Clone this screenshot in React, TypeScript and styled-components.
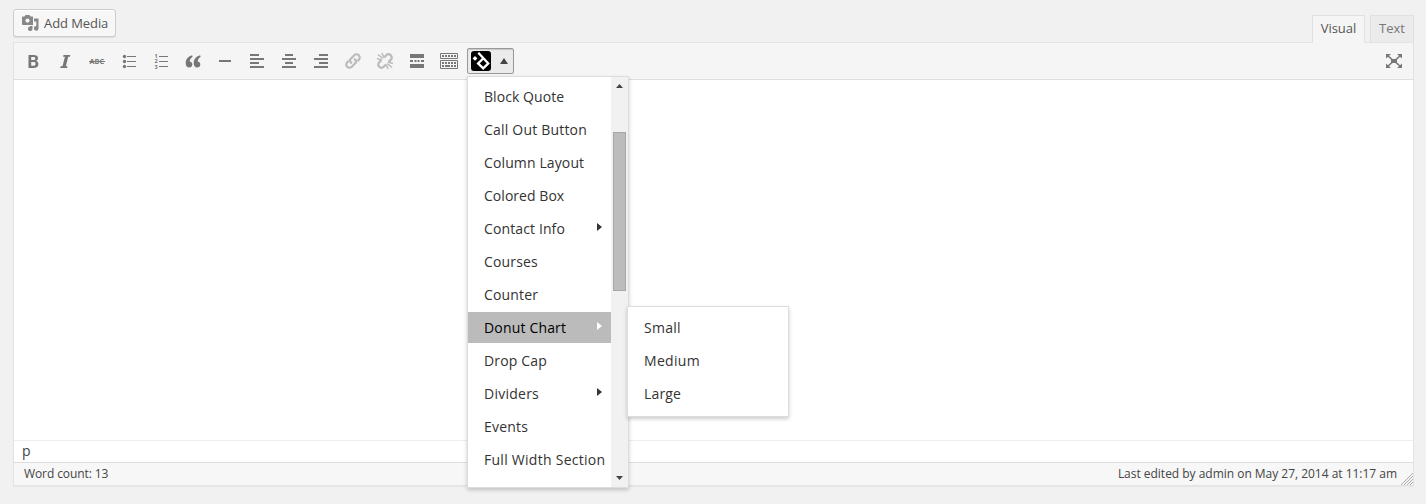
import React from 'react';
import styled, { createGlobalStyle } from 'styled-components';

const GlobalStyle = createGlobalStyle`
  * { box-sizing: border-box; }
  body {
    margin: 0;
    background: #f1f1f1;
    color: #444;
    font: 13px/18px "Open Sans", sans-serif;
  }
`;

const Page = styled.div`
  height: 504px;
  padding: 9px 12px 0 13px;
  overflow: hidden;
`;

const Header = styled.header`
  display: flex;
  justify-content: space-between;
  height: 33px;
`;

const MediaButton = styled.button`
  display: flex;
  align-items: center;
  gap: 5px;
  width: 103px;
  height: 28px;
  padding: 0 0 0 7px;
  font: 13px/26px "Open Sans", sans-serif;
  letter-spacing: -0.08px;
  color: #555;
  background: #f7f7f7;
  border: 1px solid #ccc;
  border-radius: 3px;
  box-shadow: inset 0 1px 0 #fff, 0 1px 0 rgba(0, 0, 0, 0.08);
  white-space: nowrap;
`;

const Tabs = styled.div`
  display: flex;
  gap: 5px;
  padding: 6px 0 0;
`;

const Tab = styled.div<{ $active?: boolean; $width: number }>`
  position: relative;
  z-index: 1;
  width: ${(p) => p.$width}px;
  height: ${(p) => (p.$active ? 28 : 27)}px;
  padding-top: 3px;
  text-align: center;
  color: ${(p) => (p.$active ? '#555' : '#777')};
  background: ${(p) => (p.$active ? '#f5f5f5' : '#ebebeb')};
  border: 1px solid #e0e0e0;
  border-bottom: 0;
`;

const Editor = styled.main`
  width: 1401px;
  border: 1px solid #e3e3e3;
  box-shadow: 0 1px 1px rgba(0, 0, 0, 0.04);
`;

const Toolbar = styled.div`
  display: flex;
  align-items: center;
  height: 37px;
  padding: 0 9px 0 3px;
  background: #f5f5f5;
  border-bottom: 1px solid #dedede;
`;

const Tool = styled.span<{ $dim?: boolean }>`
  display: flex;
  justify-content: center;
  width: 32px;
  height: 20px;
  color: #777;
  opacity: ${(p) => (p.$dim ? 0.45 : 1)};
`;

const ExpandTool = styled(Tool)`
  width: 20px;
`;

const Spacer = styled.div`
  flex: 1;
`;

const DropdownWrap = styled.div`
  position: relative;
  margin-left: 2px;
`;

const DropdownButton = styled.div`
  display: flex;
  align-items: center;
  gap: 9px;
  width: 47px;
  height: 26px;
  padding-left: 3px;
  background: #ebebeb;
  border: 1px solid #999;
  border-radius: 2px;
  box-shadow: inset 0 1px 1px rgba(0, 0, 0, 0.15);
`;

const Panel = styled.div`
  position: absolute;
  z-index: 5;
  background: #fff;
  border: 1px solid #ddd;
  box-shadow: 0 2px 4px rgba(0, 0, 0, 0.2);
`;

const Menu = styled(Panel)`
  top: 28px;
  left: 0;
  display: flex;
  width: 162px;
  height: 412px;
`;

const Submenu = styled(Panel)`
  top: 258px;
  left: 160px;
  z-index: 6;
  width: 162px;
  height: 111px;
  padding-top: 5px;
`;

const Items = styled.div`
  width: 143px;
  padding-top: 4px;
`;

const Item = styled.div<{ $active?: boolean; $tracking?: number }>`
  display: flex;
  align-items: center;
  justify-content: space-between;
  height: 31px;
  margin-bottom: 2px;
  padding: 0 9px 0 16px;
  font-size: 14px;
  line-height: 20px;
  letter-spacing: ${(p) => p.$tracking ?? 0.15}px;
  white-space: nowrap;
  color: ${(p) => (p.$active ? '#000' : '#333')};
  background: ${(p) => (p.$active ? '#bbb' : 'transparent')};
`;

const Caret = styled.span<{ $light?: boolean }>`
  width: 5px;
  height: 8px;
  margin-bottom: 3px;
  background: ${(p) => (p.$light ? '#fff' : '#333')};
  clip-path: polygon(0 0, 100% 50%, 0 100%);
`;

const Scrollbar = styled.div`
  display: flex;
  flex-direction: column;
  align-items: center;
  width: 17px;
  padding: 7px 0 7px;
  background: #f1f1f1;
`;

const Thumb = styled.div`
  width: 13px;
  height: 159px;
  margin-top: 44px;
  background: #bcbcbc;
  border: 1px solid #a8a8a8;
`;

const Arrow = styled.span<{ $down?: boolean; $size?: number }>`
  width: ${(p) => p.$size ?? 7}px;
  height: ${(p) => (p.$size ? 6 : 4)}px;
  background: #444;
  clip-path: ${(p) => (p.$down ? 'polygon(0 0, 100% 0, 50% 100%)' : 'polygon(50% 0, 100% 100%, 0 100%)')};
`;

const Content = styled.div`
  height: 360px;
  background: #fff;
`;

const PathRow = styled.div`
  height: 22px;
  padding: 1px 8px;
  font-size: 14px;
  background: #fff;
  border-top: 1px solid #eee;
`;

const StatusBar = styled.footer`
  display: flex;
  justify-content: space-between;
  height: 23px;
  padding: 2px 0 0 10px;
  font-size: 12px;
  background: #f7f7f7;
  border-top: 1px solid #dedede;
`;

const WordCount = styled.span`
  letter-spacing: -0.1px;
`;

const Edited = styled.div`
  display: flex;
  gap: 4px;
  letter-spacing: -0.02px;
`;

const Grip = styled.svg`
  margin-top: 8px;
`;

type IconName =
  | 'bold' | 'italic' | 'strike' | 'bullets' | 'numbers' | 'quote' | 'rule'
  | 'left' | 'center' | 'right' | 'link' | 'unlink' | 'more' | 'keyboard' | 'expand';

const glyphs: Record<IconName, React.ReactNode> = {
  bold: (
    <path
      fillRule="evenodd"
      d="M5.500 4h4.900c3 0 4.600 1 4.600 3.200 0 1.400-.8 2.400-2 2.700 1.500.3 2.400 1.400 2.400 3.100 0 2.600-1.900 4-5 4H5.500zM8.200 6.100v2.800h1.900c1.500 0 2.200-.5 2.200-1.500S11.600 6.100 10.100 6.100zM8.200 11v3.800h2c1.600 0 2.400-.6 2.400-2S11.800 11 10.200 11z"
    />
  ),
  italic: <path d="M8.500 4h6.800l-.4 1.800h-1.700L10.900 15.200h1.600l-.4 1.800H5.200l.4-1.800h1.900l2.400-9.400H8.100z" />,
  strike: (
    <>
      <text x="2.600" y="13" fontFamily="Open Sans" fontSize="7.500" fontWeight="700" textLength="14.500" lengthAdjust="spacingAndGlyphs">ABC</text>
      <path d="M2 10h16v1H2z" />
    </>
  ),
  bullets: (
    <>
      <circle cx="5.500" cy="5.500" r="1.700" /><circle cx="5.500" cy="10.500" r="1.700" /><circle cx="5.500" cy="15.500" r="1.700" />
      <path d="M8 5h9v1H8zM8 10h9v1H8zM8 15h9v1H8z" />
    </>
  ),
  numbers: (
    <>
      <path d="M8 5h9v1H8zM8 10h9v1H8zM8 15h9v1H8z" />
      <g fontFamily="Open Sans" fontSize="5.500" fontWeight="700">
        <text x="3.500" y="7">1</text><text x="3.500" y="12.300">2</text><text x="3.500" y="17.500">3</text>
      </g>
    </>
  ),
  quote: (
    <>
      <path d="M9.200 4.200C5.600 5 2.700 7.900 2.700 12c0 2.700 1.200 4.600 3.400 4.600 1.900 0 3.200-1.300 3.200-3.100 0-1.700-1-2.800-2.600-3C6.700 8.700 7.700 7 9.600 6z" />
      <path d="M17.200 4.200c-3.600.8-6.500 3.700-6.500 7.800 0 2.700 1.200 4.600 3.400 4.600 1.900 0 3.200-1.300 3.200-3.100 0-1.700-1-2.800-2.600-3 0-1.800 1-3.500 2.900-4.500z" />
    </>
  ),
  rule: <path d="M4 9h12v2H4z" />,
  left: <path d="M3 3h9v2H3zM3 7h14v2H3zM3 11h9v2H3zM3 15h14v2H3z" />,
  center: <path d="M6 3h8v2H6zM3 7h14v2H3zM6 11h8v2H6zM3 15h14v2H3z" />,
  right: <path d="M8 3h9v2H8zM3 7h14v2H3zM8 11h9v2H8zM3 15h14v2H3z" />,
  link: (
    <g fill="none" stroke="currentColor" strokeWidth="2.200" transform="rotate(-45 10 10)">
      <path d="M8 10.800a3 3 0 0 1 1-4h6a3.200 3.200 0 0 1 0 6.400h-2" />
      <path d="M12 9.200a3 3 0 0 1-1 4H5a3.200 3.200 0 0 1 0-6.400h2" />
    </g>
  ),
  unlink: (
    <g fill="none" stroke="currentColor">
      <g strokeWidth="2.300" transform="rotate(-45 10 10)">
        <path d="M12 6.800h3a3.200 3.200 0 0 1 0 6.400h-3" />
        <path d="M8 13.200H5a3.200 3.200 0 0 1 0-6.400h3" />
      </g>
      <path strokeWidth="1.500" d="M3 3.500l5 4M7 2l1.800 4.500M2 7.500l5 1.500M17 16.500l-5-4M13 18l-1.800-4.500M18 12.500L13 11" />
    </g>
  ),
  more: <path d="M3 3h14v4H3zM3 9h3v2H3zM7.500 9h2v2h-2zM10.500 9h2v2h-2zM14 9h3v2h-3zM3 13h14v4H3z" />,
  keyboard: (
    <>
      <path fill="none" stroke="currentColor" d="M1.500 2.500h17v5h-17zM1.500 9.500h17v8h-17z" />
      <path d="M3 4h2v2H3zM6 4h2v2H6zM9 4h2v2H9zM12 4h2v2h-2zM15 4h2v2h-2zM3 11h2v2H3zM6 11h2v2H6zM9 11h2v2H9zM12 11h2v2h-2zM15 11h2v2h-2zM3 14h2v2H3zM6 14h5v2H6zM12 14h2v2h-2zM15 14h2v2h-2z" />
    </>
  ),
  expand: (
    <>
      <path d="M7 8h6v4H7zM2 3h5L2 7.500zM18 3h-5L18 7.500zM2 17h5L2 12.500zM18 17h-5L18 12.500z" />
      <path fill="none" stroke="currentColor" strokeWidth="1.600" d="M3 4l5 4.500M17 4l-5 4.500M3 16l5-4.500M17 16l-5-4.500" />
    </>
  ),
};

const Icon = ({ name }: { name: IconName }) => (
  <svg width="20" height="20" viewBox="0 0 20 20" fill="currentColor">{glyphs[name]}</svg>
);

const MediaIcon = () => (
  <svg width="18" height="18" viewBox="0 0 18 18" fill="#888">
    <path fillRule="evenodd" d="M2 2.500h1.500L4.500 1h4l1 1.500H12v8.500H2Q1 11 1 10V3.500Q1 2.500 2 2.500zM6.500 4.500a2.100 2.100 0 1 0 0 4.200A2.100 2.100 0 0 0 6.500 4.500z" />
    <path d="M13 4.500h4.500v9.900a2.300 2.300 0 1 1-2.200-2.300V7.500H13zM9 12h2.500v2.700a2.300 2.300 0 1 1-2.500-2.200z" />
  </svg>
);

const Logo = () => (
  <svg width="20" height="20" viewBox="0 0 20 20">
    <rect width="20" height="20" rx="3" />
    <path fill="none" stroke="#fff" strokeWidth="2.300" d="M7.300 1.800 17.300 12.400l-5.100 5-5.100-5L11.900 7.700" />
    <path fill="#fff" d="M4 5 6.400 7.400 4 9.800 1.600 7.400z" />
  </svg>
);

const tools: IconName[] = [
  'bold', 'italic', 'strike', 'bullets', 'numbers', 'quote', 'rule',
  'left', 'center', 'right', 'link', 'unlink', 'more', 'keyboard',
];

const menuItems = [
  { label: 'Block Quote', tracking: 0.07 },
  { label: 'Call Out Button', tracking: 0.2 },
  { label: 'Column Layout', tracking: 0.12 },
  { label: 'Colored Box', tracking: 0.04 },
  { label: 'Contact Info', sub: true, tracking: 0.12 },
  { label: 'Courses', tracking: 0.15 },
  { label: 'Counter', tracking: 0.15 },
  { label: 'Donut Chart', sub: true, active: true, tracking: 0.17 },
  { label: 'Drop Cap', tracking: 0.15 },
  { label: 'Dividers', sub: true, tracking: 0.25 },
  { label: 'Events', tracking: 0.2 },
  { label: 'Full Width Section', tracking: 0.27 },
];

export default function App() {
  return (
    <Page>
      <GlobalStyle />
      <Header>
        <MediaButton><MediaIcon />Add Media</MediaButton>
        <Tabs>
          <Tab $active $width={53}>Visual</Tab>
          <Tab $width={44}>Text</Tab>
        </Tabs>
      </Header>
      <Editor>
        <Toolbar>
          {tools.map((name) => (
            <Tool key={name} $dim={name === 'link' || name === 'unlink'}><Icon name={name} /></Tool>
          ))}
          <DropdownWrap>
            <DropdownButton><Logo /><Arrow $size={8} /></DropdownButton>
            <Menu>
              <Items>
                {menuItems.map((item) => (
                  <Item key={item.label} $active={item.active} $tracking={item.tracking}>
                    {item.label}
                    {item.sub && <Caret $light={item.active} />}
                  </Item>
                ))}
              </Items>
              <Scrollbar>
                <Arrow />
                <Thumb />
                <Spacer />
                <Arrow $down />
              </Scrollbar>
            </Menu>
            <Submenu>
              <Item $tracking={0.25}>Small</Item>
              <Item $tracking={0.3}>Medium</Item>
              <Item>Large</Item>
            </Submenu>
          </DropdownWrap>
          <Spacer />
          <ExpandTool><Icon name="expand" /></ExpandTool>
        </Toolbar>
        <Content />
        <PathRow>p</PathRow>
        <StatusBar>
          <WordCount>Word count: 13</WordCount>
          <Edited>
            Last edited by admin on May 27, 2014 at 11:17 am
            <Grip width="12" height="12" viewBox="0 0 12 12" stroke="#aaa" fill="none">
              <path d="M0 12 12 0M3 12l9-9M6 12l6-6M9 12l3-3" />
            </Grip>
          </Edited>
        </StatusBar>
      </Editor>
    </Page>
  );
}
